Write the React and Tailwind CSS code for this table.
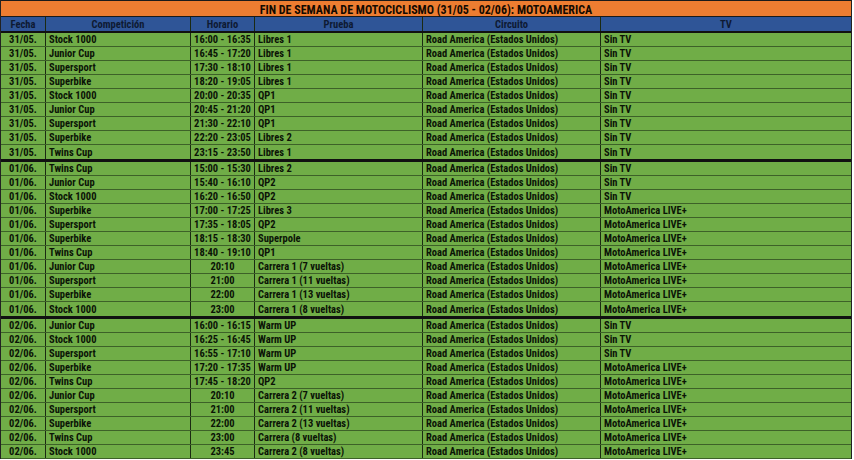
import React from "react";

const rows = [
  ["31/05.", "Stock 1000", "16:00 - 16:35", "Libres 1", "Sin TV"],
  ["31/05.", "Junior Cup", "16:45 - 17:20", "Libres 1", "Sin TV"],
  ["31/05.", "Supersport", "17:30 - 18:10", "Libres 1", "Sin TV"],
  ["31/05.", "Superbike", "18:20 - 19:05", "Libres 1", "Sin TV"],
  ["31/05.", "Stock 1000", "20:00 - 20:35", "QP1", "Sin TV"],
  ["31/05.", "Junior Cup", "20:45 - 21:20", "QP1", "Sin TV"],
  ["31/05.", "Supersport", "21:30 - 22:10", "QP1", "Sin TV"],
  ["31/05.", "Superbike", "22:20 - 23:05", "Libres 2", "Sin TV"],
  ["31/05.", "Twins Cup", "23:15 - 23:50", "Libres 1", "Sin TV", true],
  ["01/06.", "Twins Cup", "15:00 - 15:30", "Libres 2", "Sin TV"],
  ["01/06.", "Junior Cup", "15:40 - 16:10", "QP2", "Sin TV"],
  ["01/06.", "Stock 1000", "16:20 - 16:50", "QP2", "Sin TV"],
  ["01/06.", "Superbike", "17:00 - 17:25", "Libres 3", "MotoAmerica LIVE+"],
  ["01/06.", "Supersport", "17:35 - 18:05", "QP2", "MotoAmerica LIVE+"],
  ["01/06.", "Superbike", "18:15 - 18:30", "Superpole", "MotoAmerica LIVE+"],
  ["01/06.", "Twins Cup", "18:40 - 19:10", "QP1", "MotoAmerica LIVE+"],
  ["01/06.", "Junior Cup", "20:10", "Carrera 1 (7 vueltas)", "MotoAmerica LIVE+"],
  ["01/06.", "Supersport", "21:00", "Carrera 1 (11 vueltas)", "MotoAmerica LIVE+"],
  ["01/06.", "Superbike", "22:00", "Carrera 1 (13 vueltas)", "MotoAmerica LIVE+"],
  ["01/06.", "Stock 1000", "23:00", "Carrera 1 (8 vueltas)", "MotoAmerica LIVE+", true],
  ["02/06.", "Junior Cup", "16:00 - 16:15", "Warm UP", "Sin TV"],
  ["02/06.", "Stock 1000", "16:25 - 16:45", "Warm UP", "Sin TV"],
  ["02/06.", "Supersport", "16:55 - 17:10", "Warm UP", "Sin TV"],
  ["02/06.", "Superbike", "17:20 - 17:35", "Warm UP", "MotoAmerica LIVE+"],
  ["02/06.", "Twins Cup", "17:45 - 18:20", "QP2", "MotoAmerica LIVE+"],
  ["02/06.", "Junior Cup", "20:10", "Carrera 2 (7 vueltas)", "MotoAmerica LIVE+"],
  ["02/06.", "Supersport", "21:00", "Carrera 2 (11 vueltas)", "MotoAmerica LIVE+"],
  ["02/06.", "Superbike", "22:00", "Carrera 2 (13 vueltas)", "MotoAmerica LIVE+"],
  ["02/06.", "Twins Cup", "23:00", "Carrera (8 vueltas)", "MotoAmerica LIVE+"],
  ["02/06.", "Stock 1000", "23:45", "Carrera 2 (8 vueltas)", "MotoAmerica LIVE+"],
];

const cols = "grid grid-cols-[45px_145px_64px_168px_178px_1fr]";

function Cell({ children, center, last }) {
  return (
    <div
      className={`flex items-center h-full pt-[2px] overflow-hidden whitespace-nowrap ${
        center ? "justify-center" : "justify-start pl-[3px]"
      } ${last ? "" : "border-r border-[#1b2a12]"}`}
    >
      {children}
    </div>
  );
}

export default function App() {
  return (
    <div
      className="w-[854px] h-[460px] bg-white overflow-hidden pr-[2px] font-bold text-[10.5px] leading-none text-[#0b1406]"
      style={{ fontFamily: '"Liberation Sans Narrow", "Roboto Condensed", Roboto, "Liberation Sans", sans-serif' }}
    >
      <div className="border-l border-r border-[#222]">
        {/* title */}
        <div className="h-[17px] pt-[2px] bg-[#ed7d31] border-t border-b border-[#1a1a1a] flex items-center justify-center text-[12px] text-[#140a00]">
          FIN DE SEMANA DE MOTOCICLISMO (31/05 - 02/06): MOTOAMERICA
        </div>
        {/* header */}
        <div className={`${cols} h-[16px] bg-[#2f5597] border-b-2 border-[#111] text-[#0e1a33]`}>
          <Cell center>Fecha</Cell>
          <Cell center>Competición</Cell>
          <Cell center>Horario</Cell>
          <Cell center>Prueba</Cell>
          <Cell center>Circuito</Cell>
          <Cell center last>TV</Cell>
        </div>
        {/* data */}
        <div className="bg-[#70ad47]">
          {rows.map((r, i) => (
            <div
              key={i}
              className={`${cols} ${
                r[5] ? "h-[17px] border-b-[3px] border-[#111]" : "h-[14px] border-b border-[#3d6128]"
              }`}
            >
              <Cell center>{r[0]}</Cell>
              <Cell>{r[1]}</Cell>
              <Cell center>{r[2]}</Cell>
              <Cell>{r[3]}</Cell>
              <Cell>Road America (Estados Unidos)</Cell>
              <Cell last>{r[4]}</Cell>
            </div>
          ))}
        </div>
      </div>
    </div>
  );
}
